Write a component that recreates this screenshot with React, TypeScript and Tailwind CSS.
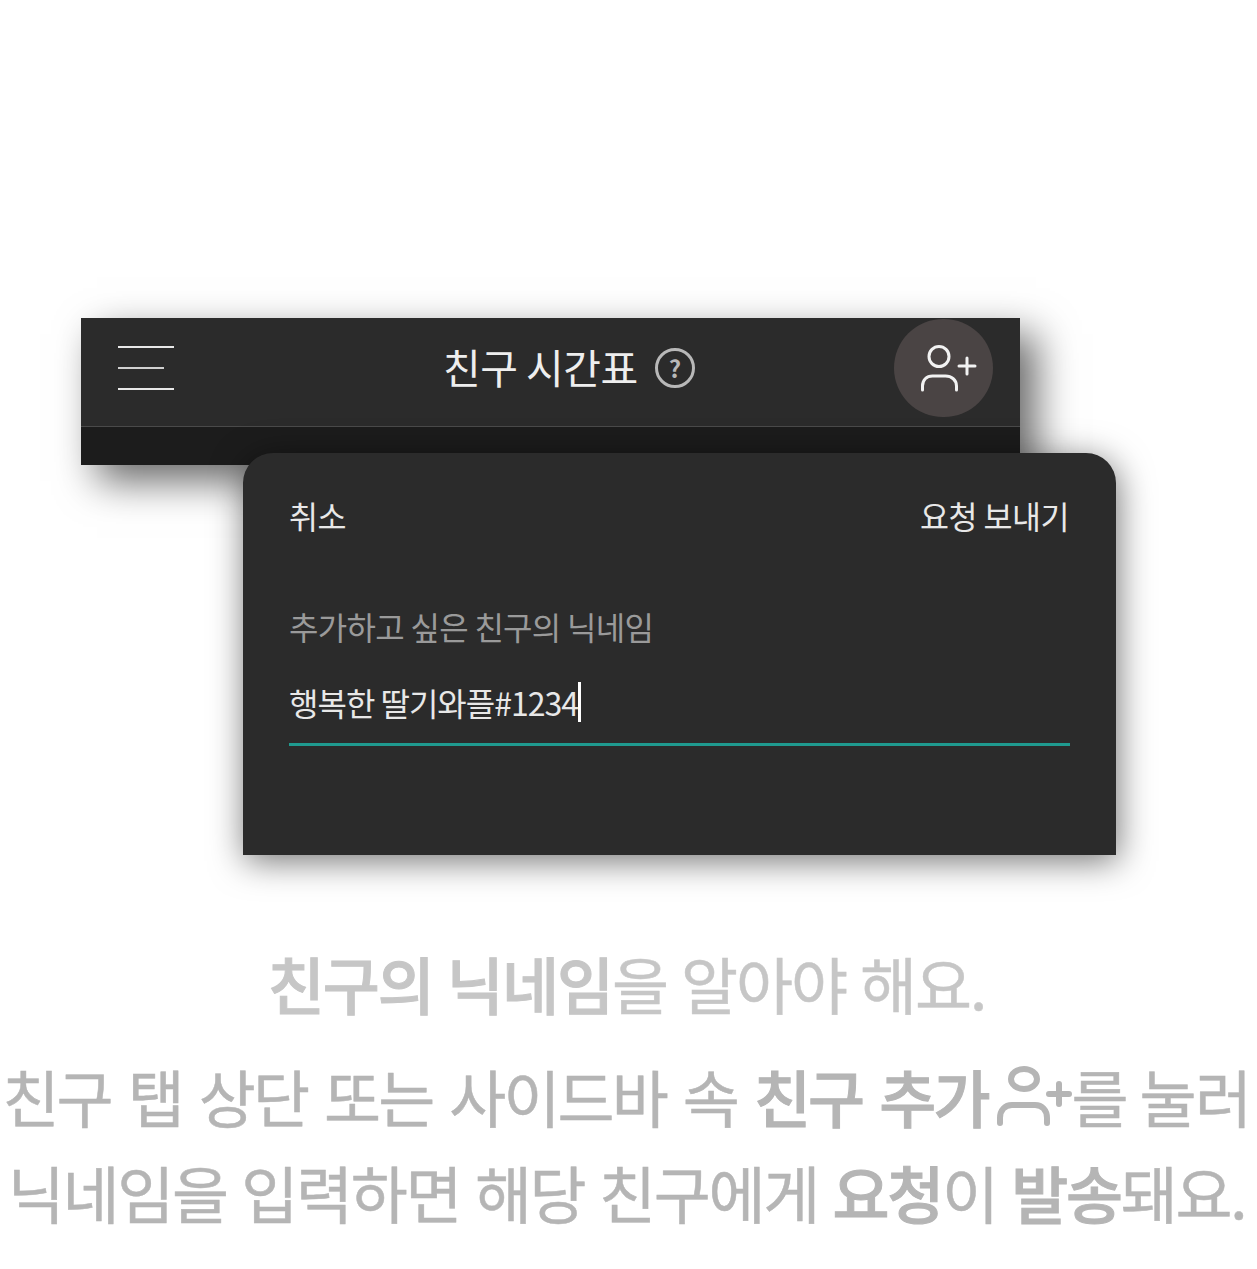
function AddFriendIcon({ className }: { className?: string }) {
  return (
    <svg viewBox="0 0 58 50" fill="none" stroke="currentColor" strokeWidth="3" strokeLinecap="round" className={className}>
      <circle cx="20" cy="13.5" r="10" />
      <path d="M3.5 47v-4c0-6 4-10 10-10h13c6 0 11 4 11 10v4" />
      <path d="M40 23h16M48 15v16" />
    </svg>
  )
}

function AddFriendGlyph({ className }: { className?: string }) {
  return (
    <svg viewBox="0 0 76 64" fill="none" stroke="currentColor" strokeWidth="6" strokeLinecap="round" className={className}>
      <ellipse cx="28" cy="15" rx="13" ry="10" />
      <path d="M4 59v-5c0-8 5-13 12-13h23c7 0 12 5 12 13v5" />
      <path d="M53 30h20M63 20v20" />
    </svg>
  )
}

export default function App() {
  return (
    <div className="h-[1269px] w-[1257px] overflow-hidden bg-white pt-[318px] font-['Noto_Sans_CJK_KR',sans-serif]">
      <header className="ml-[81px] h-[147px] w-[939px] bg-[#1c1c1c] shadow-[16px_16px_38px_rgba(0,0,0,0.6)]">
        <div className="flex h-[109px] items-center border-b border-[#4a4a4a] bg-[#2b2b2b] pr-[27px] pb-[8px] pl-[37px]">
          <div className="flex h-[44px] w-[56px] flex-col justify-between">
            <span className="h-[2px] w-[56px] bg-[#e8e8e8]" />
            <span className="h-[2px] w-[46px] bg-[#d0d0d0]" />
            <span className="h-[2px] w-[56px] bg-[#e8e8e8]" />
          </div>
          <div className="ml-[269px] flex items-center gap-[17px]">
            <h1 className="mt-[-4px] text-[41px] leading-none font-normal tracking-[-0.5px] text-[#eeeeee]">친구 시간표</h1>
            <span className="flex h-[40px] w-[40px] items-center justify-center rounded-full border-[3px] border-[#b8b8b8] text-[24px] leading-none font-bold text-[#b8b8b8]">?</span>
          </div>
          <button className="ml-auto flex h-[98px] w-[99px] items-center justify-center rounded-full bg-[#4a4444] text-[#f2f2f2]">
            <AddFriendIcon className="ml-[8px] h-[50px] w-[58px]" />
          </button>
        </div>
      </header>

      <section className="relative mt-[-12px] ml-[243px] h-[402px] w-[873px] rounded-t-[30px] bg-[#2b2b2b] pt-[43px] pr-[47px] pl-[46px] shadow-[2px_6px_34px_rgba(0,0,0,0.55)]">
        <div className="flex items-center justify-between text-[31.5px] leading-[38px] font-normal tracking-[-0.5px] text-[#e8e8e8]">
          <span>취소</span>
          <span>요청 보내기</span>
        </div>
        <p className="mt-[72px] text-[32px] leading-[40px] font-normal tracking-[-0.7px] text-[#9a9a9a]">추가하고 싶은 친구의 닉네임</p>
        <div className="mt-[35px] flex h-[41px] items-center text-[32px] font-normal tracking-[-1px] text-[#e8e8e8]">
          <span>행복한 딸기와플#1234</span>
          <span className="h-[40px] w-[3px] bg-white" />
        </div>
        <div className="mt-[21px] h-[3px] w-[781px] bg-[#1f9a8f]" />
      </section>

      <div className="mt-[97px] flex flex-col items-center pr-[4px] text-[62px] leading-none font-normal whitespace-nowrap [-webkit-text-stroke:0.5px]">
        <p className="h-[113px] tracking-[-2px] text-[#c6c6c6] [word-spacing:2px]"><b className="font-medium [-webkit-text-stroke:1px]">친구의 닉네임</b>을 알아야 해요.</p>
        <p className="flex h-[96px] items-start text-[#b5b5b5]">
          <span className="tracking-[-2.9px] [word-spacing:6px]">친구 탭 상단 또는 사이드바 속 <b className="font-medium [-webkit-text-stroke:1px]">친구 추가</b></span>
          <AddFriendGlyph className="mt-[-1px] ml-[8px] h-[64px] w-[76px]" />
          <span className="tracking-[-1.5px]">를 눌러</span>
        </p>
        <p className="tracking-[-2.3px] text-[#b5b5b5] [word-spacing:3px]">닉네임을 입력하면 해당 친구에게 <b className="font-medium [-webkit-text-stroke:1px]">요청</b>이 <b className="font-medium [-webkit-text-stroke:1px]">발송</b>돼요.</p>
      </div>
    </div>
  )
}
